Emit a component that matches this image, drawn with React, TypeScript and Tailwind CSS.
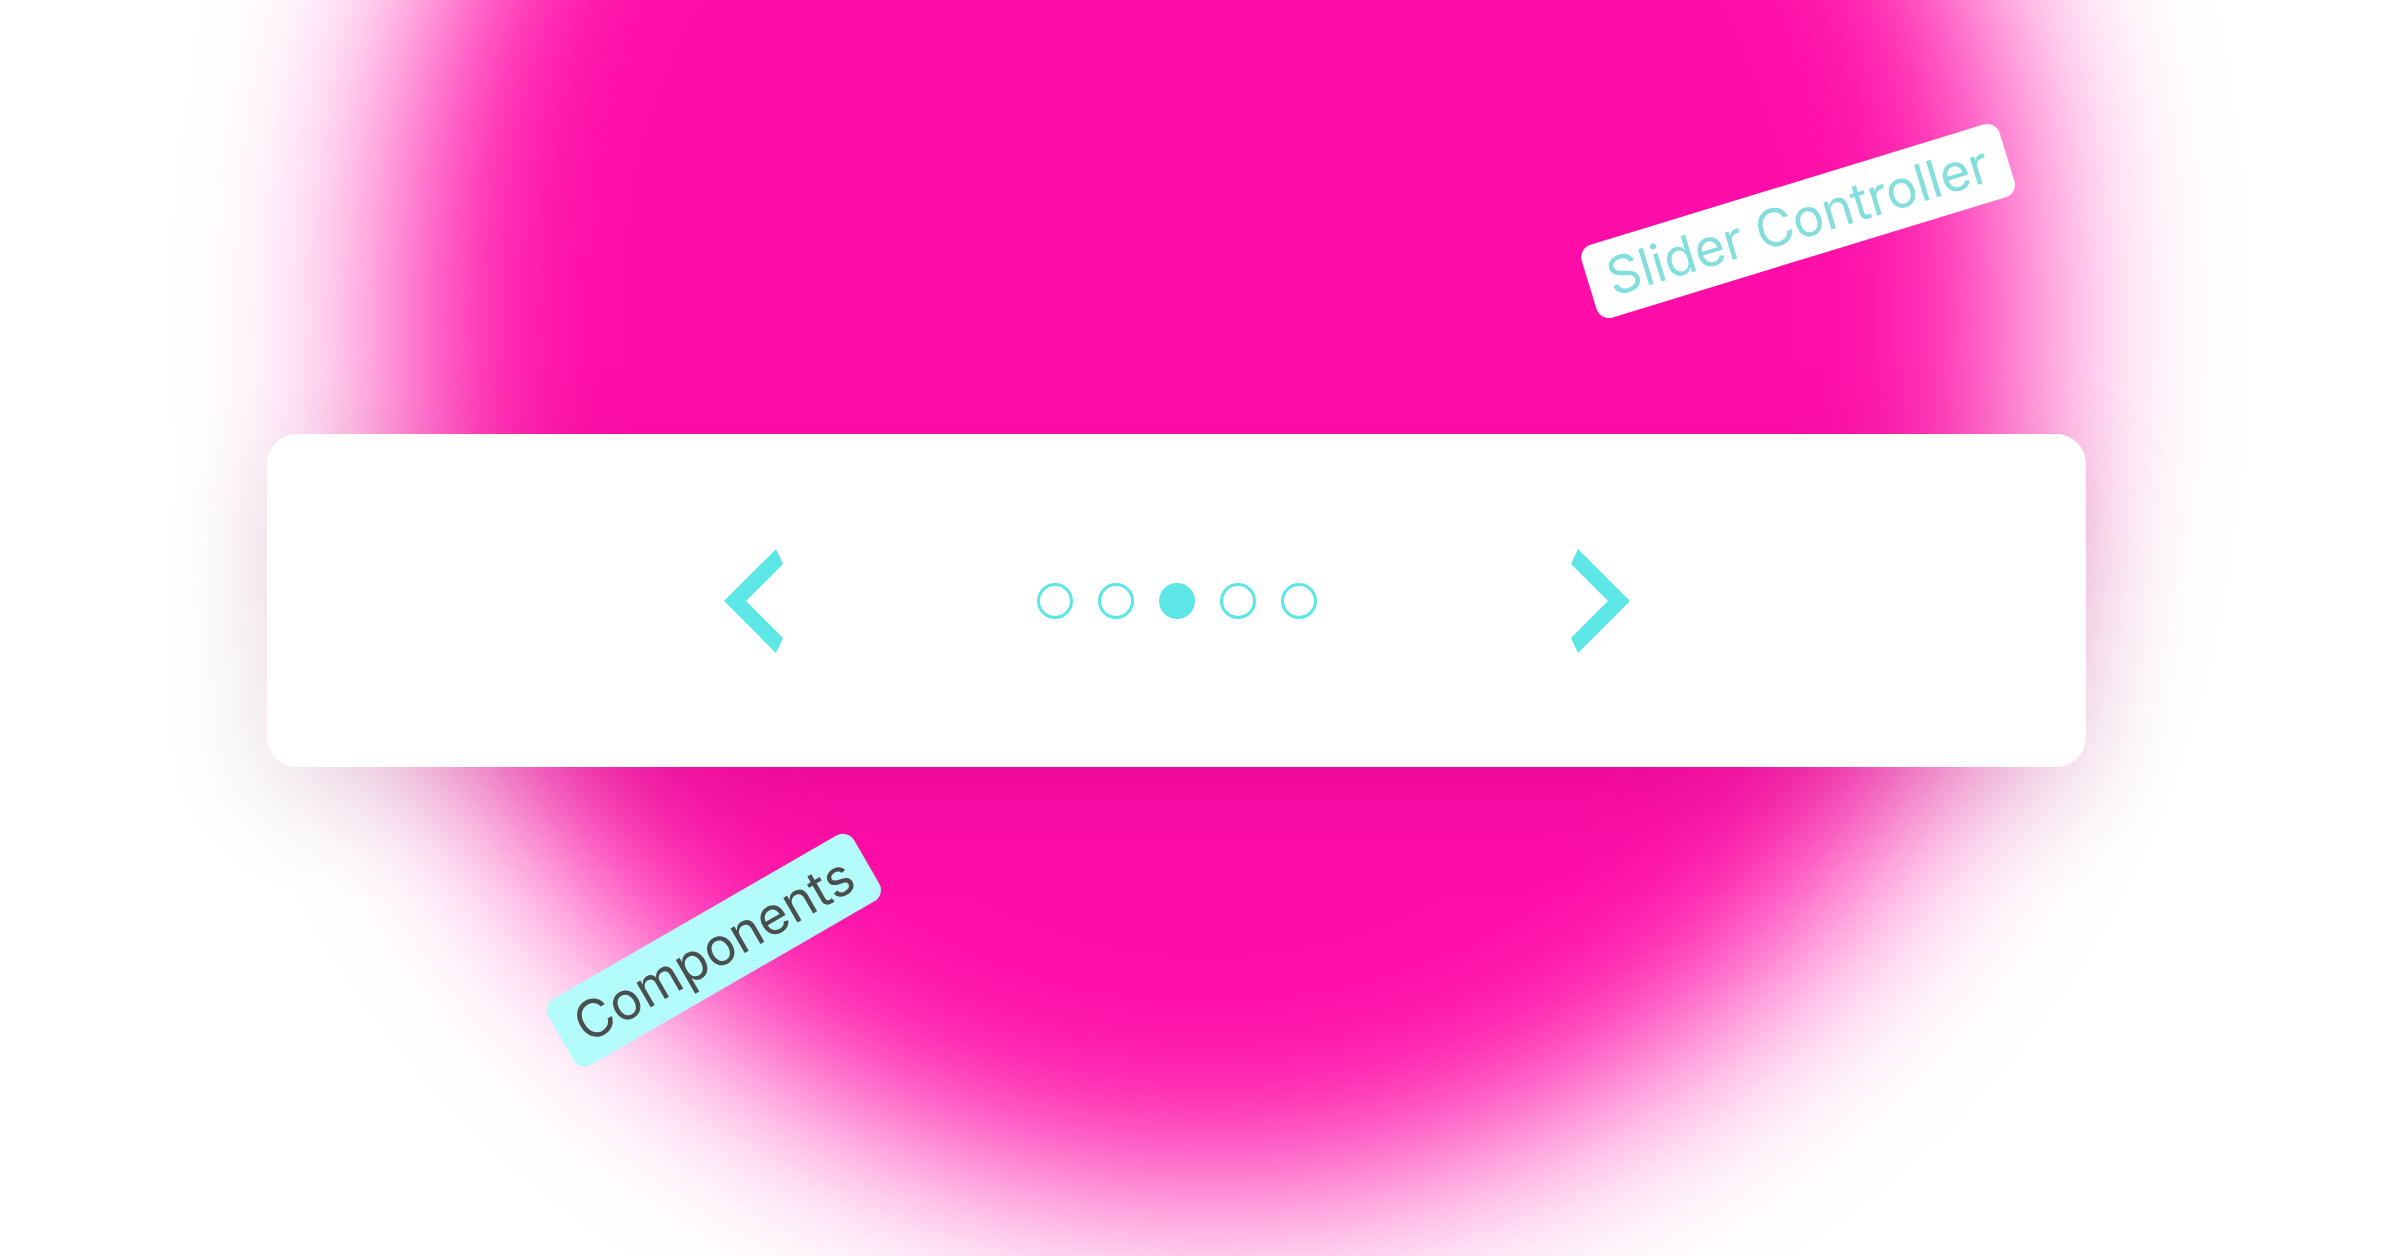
import { useState } from 'react';

const DOTS = [0, 1, 2, 3, 4];

function Chevron({ flip = false }: { flip?: boolean }) {
  return (
    <svg
      width="60"
      height="108"
      viewBox="0 0 60 108"
      className={flip ? '-scale-x-100' : ''}
    >
      <polygon points="0,54 52,2 59,17 22,54 59,91 52,106" fill="#5ce6e6" />
    </svg>
  );
}

export default function App() {
  const [active, setActive] = useState(2);

  return (
    <div className="relative h-[1256px] w-full overflow-hidden bg-white font-['Inter',sans-serif]">
      {/* pink blob behind everything */}
      <div className="absolute left-[400px] top-[-550px] h-[1740px] w-[1620px] rounded-full bg-[#ff0da8] blur-[95px]" />

      <div className="relative pl-[267px] pt-[434px]">
        <div className="flex h-[333px] w-[1819px] items-center justify-center gap-[253px] rounded-[30px] bg-white shadow-[0_30px_110px_rgba(80,0,50,0.13)]">
          <button onClick={() => setActive((a) => Math.max(0, a - 1))}>
            <Chevron />
          </button>
          <div className="flex items-center gap-[25px]">
            {DOTS.map((i) => (
              <button
                key={i}
                onClick={() => setActive(i)}
                className={
                  i === active
                    ? 'h-9 w-9 rounded-full bg-[#5ce6e6]'
                    : 'h-9 w-9 rounded-full border-[3px] border-[#5ce6e6] bg-transparent'
                }
              />
            ))}
          </div>
          <button onClick={() => setActive((a) => Math.min(4, a + 1))}>
            <Chevron flip />
          </button>
        </div>
      </div>

      {/* stickers */}
      <div className="absolute left-[1798px] top-[221px] -translate-x-1/2 -translate-y-1/2 -rotate-[17deg] whitespace-nowrap rounded-[13px] bg-white px-5 text-[52px] leading-[76px] text-[#84dede]">
        Slider Controller
      </div>
      <div className="absolute left-[714px] top-[950px] -translate-x-1/2 -translate-y-1/2 -rotate-[30deg] whitespace-nowrap rounded-[13px] bg-[#b4fbfb] px-5 text-[52px] leading-[76px] text-[#4a4f4d]">
        Components
      </div>
    </div>
  );
}
